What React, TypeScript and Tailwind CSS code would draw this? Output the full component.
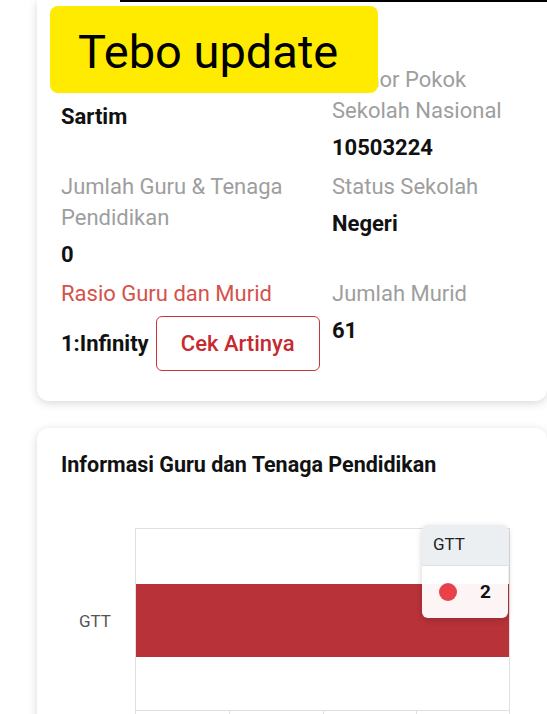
import React from 'react';

const font = { fontFamily: 'Roboto, "Noto Sans", Arial, sans-serif' };

interface InfoItemProps {
  label: string;
  value?: string;
  labelClass?: string;
  children?: React.ReactNode;
}

const InfoItem: React.FC<InfoItemProps> = ({ label, value, labelClass, children }) => (
  <div className="flex flex-col">
    <span className={`text-[22px] leading-[31px] ${labelClass || 'text-[#9e9e9e]'}`}>{label}</span>
    {children ? (
      children
    ) : (
      <span className="mt-2 text-[22px] leading-[28px] font-bold text-[#111]">{value}</span>
    )}
  </div>
);

const App: React.FC = () => {
  return (
    <div className="relative min-h-[714px] w-[547px] overflow-hidden bg-white" style={font}>
      <div className="absolute top-0 right-0 left-[120px] h-[2px] bg-black" />

      <div className="pl-[37px]">
        {/* school profile card */}
        <div className="rounded-b-xl bg-white pt-[64px] pb-[30px] pl-6 pr-6 shadow-[0_2px_10px_rgba(0,0,0,0.16)]">
          <div className="grid grid-cols-[271px_1fr] gap-y-[9px]">
            <InfoItem label="Kepala Sekolah" value="Sartim" />
            <InfoItem label="Nomor Pokok Sekolah Nasional" value="10503224" />
            <InfoItem label="Jumlah Guru & Tenaga Pendidikan" value="0" />
            <InfoItem label="Status Sekolah" value="Negeri" />
            <InfoItem label="Rasio Guru dan Murid" labelClass="text-[#d4524c]">
              <div className="mt-[7px] flex items-center gap-[7px]">
                <span className="text-[22px] leading-[28px] font-bold text-[#111]">1:Infinity</span>
                <button className="h-[55px] w-[164px] rounded-md border-[1.5px] border-[#c9353a] text-[22px] font-medium text-[#c62a31]">
                  Cek Artinya
                </button>
              </div>
            </InfoItem>
            <InfoItem label="Jumlah Murid" value="61" />
          </div>
        </div>

        {/* teacher chart card */}
        <div className="mt-[27px] rounded-xl bg-white pt-[23px] pl-6 shadow-[0_2px_10px_rgba(0,0,0,0.16)]">
          <h3 className="text-[21.5px] leading-[28px] font-bold text-[#111]">
            Informasi Guru dan Tenaga Pendidikan
          </h3>

          <div className="mt-[49px] flex">
            <div className="flex h-[182px] w-[74px] items-center justify-end pr-[24px] pt-[6px]">
              <span className="text-[17px] text-[#555]">GTT</span>
            </div>
            <div className="relative w-[375px]">
              <div className="flex h-[182px] flex-col border-t border-l border-r border-[#e0e0e0] pt-[55px]">
                <div className="h-[73px] w-full bg-[#b83239]" />
              </div>
              <div className="grid h-[40px] grid-cols-4 border-t border-[#e0e0e0]">
                <div className="border-l border-[#e0e0e0]" />
                <div className="border-l border-[#e0e0e0]" />
                <div className="border-l border-[#e0e0e0]" />
                <div className="border-l border-r border-[#e0e0e0]" />
              </div>

              {/* hover tooltip */}
              <div className="absolute top-[-3px] left-[287px] w-[86px] overflow-hidden rounded-md shadow-[0_2px_6px_rgba(0,0,0,0.18)]">
                <div className="flex h-[41px] items-center border-b border-[#dde1e4] bg-[#eceff1] pl-[11px] text-[17px] text-[#222]">
                  GTT
                </div>
                <div className="flex h-[52px] items-center justify-between bg-white/95 pl-[17px] pr-[17px]">
                  <span className="h-[18px] w-[18px] rounded-full bg-[#e8414a]" />
                  <span className="text-[19px] font-bold text-[#111]">2</span>
                </div>
              </div>
            </div>
          </div>
        </div>
      </div>

      {/* update banner */}
      <div className="absolute top-[6px] left-[50px] flex h-[87px] w-[328px] items-center rounded-lg bg-[#ffeb00] pl-[28px] pt-1">
        <span className="text-[47px] leading-none text-black">Tebo update</span>
      </div>
    </div>
  );
};

export default App;
